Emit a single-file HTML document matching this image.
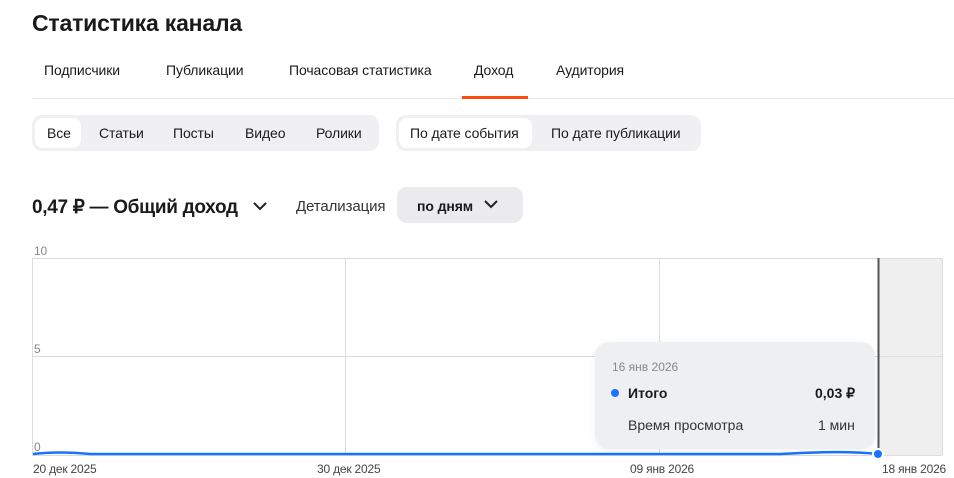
<!DOCTYPE html>
<html><head><meta charset="utf-8"><style>
*{margin:0;padding:0;box-sizing:border-box}
body{width:954px;height:478px;background:#fff;font-family:"Liberation Sans",sans-serif;color:#1a1a1a;position:relative;overflow:hidden}
.a{position:absolute;white-space:nowrap}
.tab{font-size:14px;top:62px;letter-spacing:-0.1px}
.seg{font-size:14px;top:125px;letter-spacing:-0.1px}
.grp{position:absolute;top:115px;height:36px;background:#f0f0f2;border-radius:10px}
.pill{position:absolute;top:118px;height:30px;background:#fff;border-radius:8px}
.ax{font-size:12px;color:#888;letter-spacing:-0.2px}
</style></head><body>
<div class="a" style="left:32px;top:10px;font-size:23px;font-weight:bold;letter-spacing:-0.2px">Статистика канала</div>
<div class="a tab" style="left:44px">Подписчики</div>
<div class="a tab" style="left:166px">Публикации</div>
<div class="a tab" style="left:289px">Почасовая статистика</div>
<div class="a tab" style="left:474px">Доход</div>
<div class="a tab" style="left:556px">Аудитория</div>
<div class="a" style="left:32px;top:98px;width:922px;height:1px;background:#ebebeb"></div>
<div class="a" style="left:462px;top:96px;width:66px;height:3px;background:#fc4c12"></div>

<div class="grp" style="left:32px;width:347px"></div>
<div class="pill" style="left:35px;width:46px"></div>
<div class="grp" style="left:396px;width:305px"></div>
<div class="pill" style="left:399px;width:133px"></div>
<div class="a seg" style="left:47px">Все</div>
<div class="a seg" style="left:99px">Статьи</div>
<div class="a seg" style="left:173px">Посты</div>
<div class="a seg" style="left:245px">Видео</div>
<div class="a seg" style="left:316px">Ролики</div>
<div class="a seg" style="left:410px">По дате события</div>
<div class="a seg" style="left:551px">По дате публикации</div>

<div class="a" style="left:32px;top:196px;font-size:19px;font-weight:bold;letter-spacing:-0.3px">0,47 ₽ — Общий доход</div>
<svg class="a" style="left:252px;top:200px" width="16" height="12"><path d="M2 3l6 6 6-6" fill="none" stroke="#222" stroke-width="2"/></svg>
<div class="a" style="left:296px;top:198px;font-size:15px;color:#333;letter-spacing:-0.1px">Детализация</div>
<div class="a" style="left:397px;top:187px;width:126px;height:36px;background:#ebebed;border-radius:10px"></div>
<div class="a" style="left:417px;top:198px;font-size:14px;font-weight:bold;letter-spacing:-0.1px">по дням</div>
<svg class="a" style="left:483px;top:198px" width="16" height="12"><path d="M2 3l6 6 6-6" fill="none" stroke="#222" stroke-width="2"/></svg>

<svg class="a" style="left:0;top:0" width="954" height="478">
<rect x="879" y="258" width="63" height="197" fill="#efefef"/>
<g stroke="#dcdcdc" stroke-width="1" fill="none">
<line x1="32" y1="258.5" x2="942" y2="258.5"/>
<line x1="32" y1="356.5" x2="942" y2="356.5"/>
<line x1="32" y1="455.5" x2="942" y2="455.5"/>
<line x1="32.5" y1="258" x2="32.5" y2="455"/>
<line x1="345.5" y1="258" x2="345.5" y2="455"/>
<line x1="659.5" y1="258" x2="659.5" y2="455"/>
<line x1="942.5" y1="258" x2="942.5" y2="455"/>
</g>
<line x1="878.5" y1="258" x2="878.5" y2="455" stroke="#555" stroke-width="2"/>
<path d="M33 454 C50 452 70 452 90 454 L780 454 C820 452 850 451 878 454" fill="none" stroke="#1a73ff" stroke-width="2.5"/>
<circle cx="878" cy="454" r="5" fill="#1a73ff" stroke="#fff" stroke-width="2"/>
</svg>
<div class="a ax" style="left:34px;top:244px">10</div>
<div class="a ax" style="left:34px;top:342px">5</div>
<div class="a ax" style="left:34px;top:440px">0</div>
<div class="a ax" style="left:33px;top:462px;color:#444">20 дек 2025</div>
<div class="a ax" style="left:317px;top:462px;color:#444">30 дек 2025</div>
<div class="a ax" style="left:630px;top:462px;color:#444">09 янв 2026</div>
<div class="a ax" style="left:882px;top:462px;color:#444">18 янв 2026</div>

<div class="a" style="left:595px;top:342px;width:280px;height:107px;background:#eeeff1;border-radius:14px;box-shadow:0 2px 8px rgba(0,0,0,0.06)"></div>
<div class="a" style="left:612px;top:360px;font-size:12px;color:#888">16 янв 2026</div>
<div class="a" style="left:611px;top:389px;width:8px;height:8px;border-radius:50%;background:#1a73ff"></div>
<div class="a" style="left:628px;top:385px;font-size:14px;font-weight:bold">Итого</div>
<div class="a" style="left:815px;top:385px;font-size:14px;font-weight:bold">0,03 ₽</div>
<div class="a" style="left:628px;top:417px;font-size:14px;color:#333">Время просмотра</div>
<div class="a" style="left:818px;top:417px;font-size:14px;color:#333">1 мин</div>
</body></html>
